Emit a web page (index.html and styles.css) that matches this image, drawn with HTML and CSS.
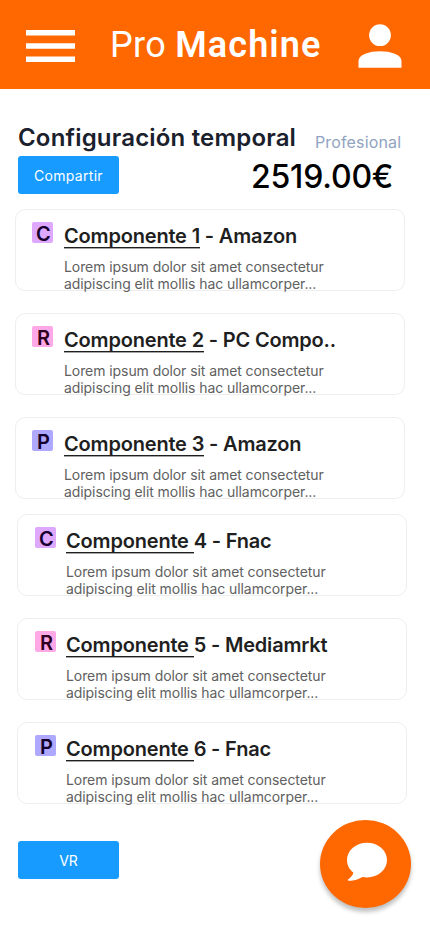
FILE: index.html
```html
<!DOCTYPE html>
<html lang="es">
<head>
<meta charset="utf-8">
<meta name="viewport" content="width=device-width, initial-scale=1">
<title>Pro Machine</title>
<link rel="stylesheet" href="styles.css">
</head>
<body>
<header class="topbar">
  <svg class="menu-icon" width="49" height="32" viewBox="0 0 49 32"><path d="M0 0h49v5.500H0zM0 13.200h49v5.500H0zM0 26.500h49V32H0z"/></svg>
  <h1 class="brand">Pro <b>Machine</b></h1>
  <svg class="user-icon" width="44" height="44" viewBox="0 0 44 44"><circle cx="22" cy="11.200" r="10.900"/><path d="M.5 43.700V37C.5 30.500 11.500 27.200 22 27.200S43.500 30.500 43.500 37v6.700z"/></svg>
</header>
<main class="content">
  <div class="heading">
    <h2 class="title">Configuración temporal</h2>
    <span class="tier">Profesional</span>
  </div>
  <div class="summary">
    <button class="button">Compartir</button>
    <strong class="price">2519.00€</strong>
  </div>
  <section class="cards">
    <article class="card"><span class="tag tag-c">C</span><div class="info"><h3 class="name"><u>Componente 1</u> - Amazon</h3><p class="desc">Lorem ipsum dolor sit amet consectetur<br>adipiscing elit mollis hac ullamcorper...</p></div></article>
    <article class="card"><span class="tag tag-r">R</span><div class="info"><h3 class="name"><u>Componente 2</u> - PC Compo..</h3><p class="desc">Lorem ipsum dolor sit amet consectetur<br>adipiscing elit mollis hac ullamcorper...</p></div></article>
    <article class="card"><span class="tag tag-p">P</span><div class="info"><h3 class="name"><u>Componente 3</u> - Amazon</h3><p class="desc">Lorem ipsum dolor sit amet consectetur<br>adipiscing elit mollis hac ullamcorper...</p></div></article>
  </section>
  <section class="cards cards-more">
    <article class="card"><span class="tag tag-c">C</span><div class="info"><h3 class="name"><u>Componente </u>4 - Fnac</h3><p class="desc">Lorem ipsum dolor sit amet consectetur<br>adipiscing elit mollis hac ullamcorper...</p></div></article>
    <article class="card"><span class="tag tag-r">R</span><div class="info"><h3 class="name"><u>Componente </u>5 - Mediamrkt</h3><p class="desc">Lorem ipsum dolor sit amet consectetur<br>adipiscing elit mollis hac ullamcorper...</p></div></article>
    <article class="card"><span class="tag tag-p">P</span><div class="info"><h3 class="name"><u>Componente </u>6 - Fnac</h3><p class="desc">Lorem ipsum dolor sit amet consectetur<br>adipiscing elit mollis hac ullamcorper...</p></div></article>
  </section>
  <button class="button button-vr">VR</button>
</main>
<button class="chat" aria-label="Chat"><svg width="42" height="40" viewBox="0 0 42 40"><path d="M22 .7C11 .7 2 8.300 2 18c0 5.300 2.500 9.700 6.400 12.500C7.900 33.500 5.300 36 2.600 37.900c.7 1.500 7.400 1.300 14.800-2.900 1.500.3 3 .4 4.600.4 11.200 0 20-7.700 20-17.400S33.200.7 22 .7z"/></svg></button>
</body>
</html>
```
FILE: styles.css
```css
* { box-sizing: border-box; }
body { margin: 0; height: 932px; background: #fff; font-family: Inter, sans-serif; overflow: hidden; }
h1, h2, h3, p { margin: 0; }
button { border: 0; padding: 0; font: inherit; }
.topbar { height: 89px; background: #ff6700; display: flex; align-items: flex-start; padding: 24px 28px 0 26px; color: #fff; fill: #fff; }
.menu-icon { margin-top: 6px; flex: none; }
.brand { margin-left: 35px; width: 212px; flex: none; font: 400 36px/42px Roboto, sans-serif; letter-spacing: .3px; white-space: nowrap; }
.brand b { font-weight: 600; letter-spacing: 1.1px; }
.user-icon { margin-left: 36px; flex: none; }
.content { padding: 35px 0 0 18px; }
.heading { display: flex; height: 32px; white-space: nowrap; }
.title { width: 297px; font-size: 24px; line-height: 27px; font-weight: 600; letter-spacing: .18px; color: #1a202c; }
.tier { font-size: 16px; line-height: 37px; letter-spacing: .15px; color: #90a3bf; }
.summary { display: flex; height: 38px; }
.button { width: 101px; height: 38px; border-radius: 3px; background: #179bff; color: #fff; font-size: 14px; font-weight: 400; letter-spacing: .3px; line-height: 39px; }
.price { margin-left: 132px; font-size: 32px; font-weight: 500; line-height: 42px; letter-spacing: -.2px; color: #000; white-space: nowrap; }
.cards { display: grid; gap: 22px; width: 390px; margin: 15px 0 0 -3px; }
.cards-more { margin: 15px 0 0 -1px; }
.card { height: 82px; display: flex; border: 1px solid #eee; border-radius: 10px; padding: 12px 0 0 16px; white-space: nowrap; }
.tag { width: 21px; height: 21px; flex: none; border-radius: 2px; margin-right: 11px; padding-left: 5px; font-size: 20px; font-weight: 600; line-height: 24px; letter-spacing: -.5px; }
.tag-c { padding-left: 4px; }
.cards-more .tag { margin-left: 1px; margin-right: 10px; }
.tag-c { background: #dfa8ff; color: #17002b; }
.tag-r { background: #ffa8e8; color: #2b0020; }
.tag-p { background: #aea8ff; color: #15002b; }
.name { font-size: 20px; font-weight: 600; line-height: 28px; letter-spacing: -.18px; color: #1f1f1f; }
.name u { text-decoration: none; display: inline-block; white-space: pre; height: 26px; border-bottom: 1px solid #1f1f1f; box-shadow: 0 1px rgba(31,31,31,.4); }
.desc { margin-top: 8px; font-size: 14px; line-height: 17px; letter-spacing: -.075px; color: #606060; }
.button-vr { display: block; margin-top: 37px; letter-spacing: 0; }
.chat { position: absolute; left: 320px; top: 820px; width: 91px; height: 88px; border-radius: 50%; background: #ff6700; fill: #fff; box-shadow: 0 4px 4px rgba(0,0,0,.25); }
```
